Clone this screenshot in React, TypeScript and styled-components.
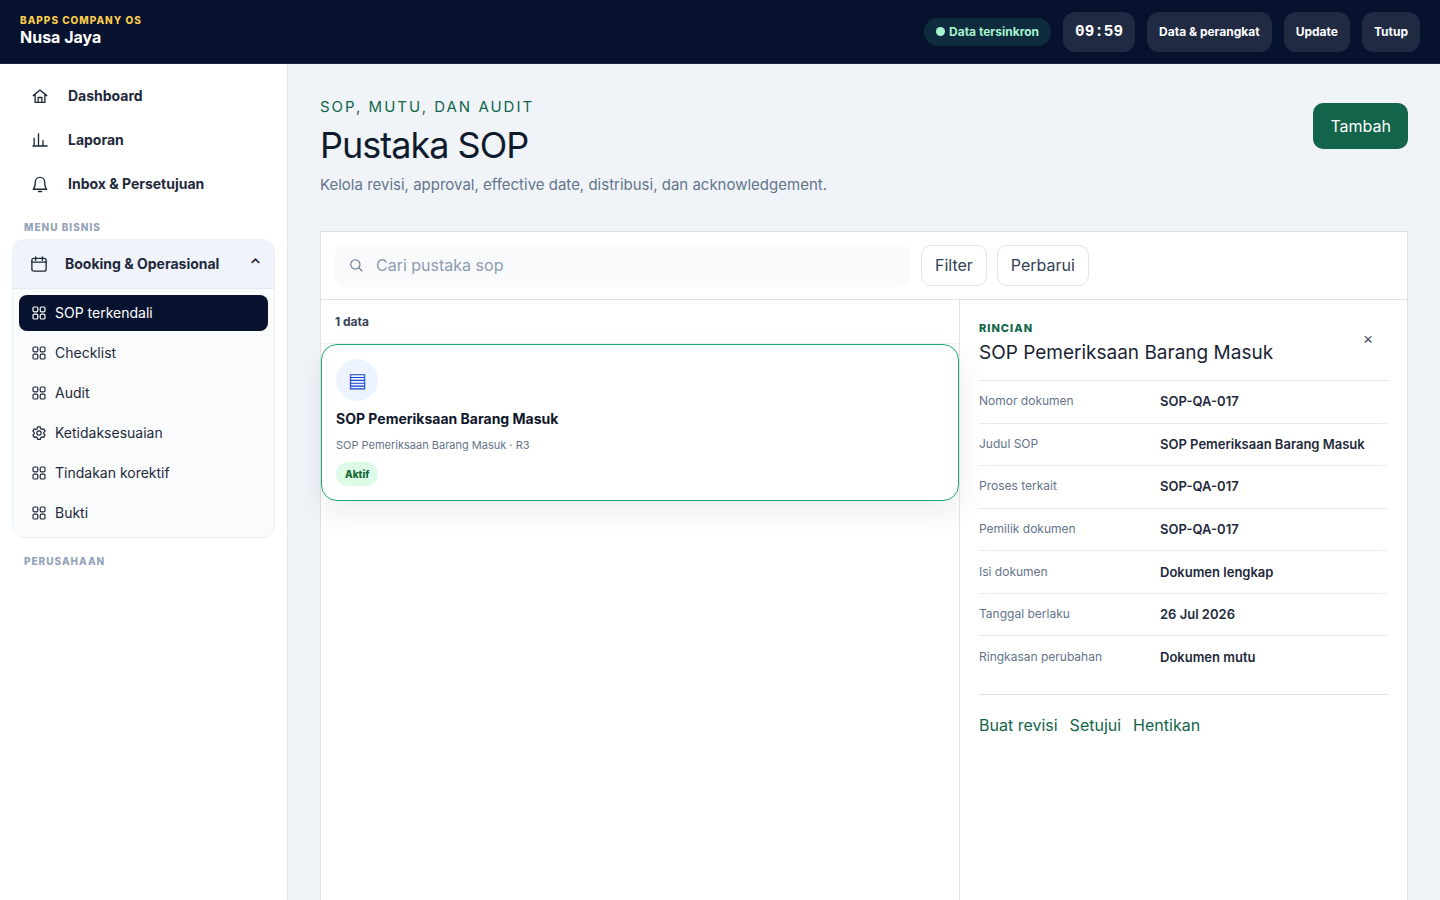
import React from "react";
import styled, { createGlobalStyle, css } from "styled-components";

const GlobalStyle = createGlobalStyle`
  *, *::before, *::after { box-sizing: border-box; }
  body {
    margin: 0;
    background: #f0f4f9;
    color: #1e293b;
    font-family: Inter, "Liberation Sans", sans-serif;
    font-size: 16px;
    line-height: 24px;
  }
  button, input { font: inherit; color: inherit; }
  button { cursor: pointer; }
  h1, h2, h3, p, dl, dd { margin: 0; }
`;

const Shell = styled.div`
  display: flex;
  flex-direction: column;
  min-height: 100vh;
`;

/* Top bar */
const TopBar = styled.header`
  display: flex;
  align-items: center;
  justify-content: space-between;
  height: 64px;
  padding: 0 20px;
  background: #07122e;
  border-bottom: 1px solid #1b2540;
  color: #fff;
`;
const Brand = styled.div`
  display: flex;
  flex-direction: column;
  padding-bottom: 4px;
`;
const BrandLabel = styled.span`
  color: #facc4b;
  font-size: 10px;
  font-weight: 800;
  letter-spacing: 1px;
  line-height: 14px;
`;
const BrandName = styled.strong`
  font-size: 16px;
  font-weight: 700;
  line-height: 20px;
`;
const TopActions = styled.div`
  display: flex;
  align-items: center;
  gap: 12px;
`;
const SyncPill = styled.span`
  display: flex;
  align-items: center;
  gap: 4px;
  height: 28px;
  padding: 0 12px;
  border-radius: 14px;
  background: #0e2c3d;
  color: #a7f3d0;
  font-size: 12px;
  font-weight: 700;
`;
const Dot = styled.i`
  width: 9px;
  height: 9px;
  border-radius: 50%;
  background: currentColor;
`;
const tile = css`
  display: flex;
  align-items: center;
  height: 40px;
  padding: 0 12px;
  border: 0;
  border-radius: 12px;
  background: #202a43;
  color: #fff;
  font-weight: 700;
`;
const Clock = styled.time`
  ${tile}
  font-family: "Liberation Mono", monospace;
  font-size: 16px;
`;
const TopButton = styled.button`
  ${tile}
  font-size: 12px;
`;

/* Sidebar */
const Body = styled.div`
  display: flex;
  flex: 1;
`;
const Sidebar = styled.nav`
  flex: 0 0 288px;
  padding: 10px 12px;
  background: #fff;
  border-right: 1px solid #e2e8f0;
`;
const NavLink = styled.a`
  display: flex;
  align-items: center;
  gap: 19px;
  height: 44px;
  padding: 0 19px;
  color: #1e293b;
  font-size: 14px;
  font-weight: 700;
  text-decoration: none;
`;
const NavCaption = styled.h2`
  padding: 13px 12px 4px;
  color: #94a3b8;
  font-size: 10px;
  font-weight: 800;
  letter-spacing: 1px;
  line-height: 16px;
`;
const Group = styled.section`
  overflow: hidden;
  margin-bottom: 2px;
  border: 1px solid #edf1f7;
  border-radius: 12px;
  background: #f9fbfd;
`;
const GroupToggle = styled.button`
  display: flex;
  align-items: center;
  gap: 17px;
  width: 100%;
  height: 49px;
  padding: 0 13px 0 17px;
  border: 0;
  border-bottom: 1px solid #e2e8f0;
  background: #f0f3f9;
  font-size: 14px;
  font-weight: 700;
  text-align: left;
`;
const GroupName = styled.span`
  flex: 1;
`;
const GroupList = styled.div`
  display: grid;
  gap: 4px;
  padding: 6px;
`;
const SubLink = styled.a<{ $active?: boolean }>`
  display: flex;
  align-items: center;
  gap: 8px;
  height: 36px;
  padding: 0 12px;
  border-radius: 8px;
  background: ${(p) => (p.$active ? "#07122e" : "transparent")};
  color: ${(p) => (p.$active ? "#fff" : "#1e293b")};
  font-size: 14px;
  text-decoration: none;
`;

/* Page */
const Main = styled.main`
  display: flex;
  flex: 1;
  flex-direction: column;
  min-width: 0;
  padding: 31px 32px 0;
`;
const PageHead = styled.div`
  display: flex;
  align-items: flex-start;
  justify-content: space-between;
  padding-bottom: 34px;
`;
const Eyebrow = styled.p`
  color: #12654a;
  font-size: 15px;
  letter-spacing: 2px;
`;
const Title = styled.h1`
  color: #0f1b2d;
  font-size: 36px;
  font-weight: 400;
  letter-spacing: -1px;
  line-height: 52px;
`;
const Lead = styled.p`
  padding-top: 2px;
  color: #64748b;
  font-size: 15px;
`;
const PrimaryButton = styled.button`
  height: 46px;
  margin-top: 8px;
  padding: 0 17px;
  border: 0;
  border-radius: 10px;
  background: #12654a;
  color: #fff;
`;
const Workspace = styled.section`
  display: flex;
  flex: 1;
  flex-direction: column;
  border: 1px solid #dde2e9;
  border-bottom: 0;
  background: #fff;
`;
const Toolbar = styled.div`
  display: flex;
  align-items: flex-start;
  gap: 10px;
  padding: 13px 14px 12px;
  border-bottom: 1px solid #dde2e9;
`;
const Search = styled.label`
  display: flex;
  flex: 1;
  align-items: center;
  gap: 12px;
  max-width: 576px;
  height: 42px;
  padding: 0 13px 2px;
  border-radius: 10px;
  background: #f8fafc;
  color: #64748b;
`;
const SearchInput = styled.input`
  flex: 1;
  min-width: 0;
  padding: 0;
  border: 0;
  outline: 0;
  background: transparent;
  color: #1e293b;
  &::placeholder { color: #8f9bb0; opacity: 1; }
`;
const ToolButton = styled.button`
  height: 41px;
  padding: 0 13px 2px;
  border: 1px solid #dfe4eb;
  border-radius: 10px;
  background: #fff;
  color: #334155;
`;
const Columns = styled.div`
  display: grid;
  flex: 1;
  grid-template-columns: minmax(0, 1fr) 448px;
`;
const ListPane = styled.div``;
const Count = styled.p`
  padding: 10px 14px 9px;
  border-bottom: 1px solid #edf0f4;
  color: #334155;
  font-size: 12px;
  font-weight: 700;
`;
const RecordCard = styled.article`
  display: flex;
  flex-direction: column;
  align-items: flex-start;
  gap: 8px;
  padding: 14px;
  border: 1px solid #20a878;
  border-radius: 16px;
  background: #fff;
  box-shadow: 0 12px 30px rgba(15, 23, 42, 0.08);
`;
const RecordIcon = styled.span`
  display: grid;
  place-items: center;
  width: 42px;
  height: 42px;
  border-radius: 50%;
  background: #eef4ff;
  color: #1d4ed8;
  font-size: 20px;
`;
const RecordTitle = styled.h3`
  color: #0f172a;
  font-size: 14px;
  font-weight: 700;
  line-height: 20px;
`;
const RecordMeta = styled.p`
  color: #64748b;
  font-size: 11px;
  line-height: 17px;
`;
const Badge = styled.span`
  padding: 0 9px;
  border-radius: 12px;
  background: #dcfce7;
  color: #166534;
  font-size: 10px;
  font-weight: 800;
`;

/* Detail pane */
const Detail = styled.aside`
  padding: 19px;
  border-left: 1px solid #dde2e9;
`;
const DetailHead = styled.div`
  display: flex;
  align-items: flex-start;
  justify-content: space-between;
  padding-bottom: 11px;
  border-bottom: 1px solid #e5e9ef;
`;
const DetailLabel = styled.p`
  color: #12654a;
  font-size: 11px;
  font-weight: 800;
  letter-spacing: 1px;
  line-height: 18px;
`;
const DetailTitle = styled.h2`
  color: #1a2434;
  font-size: 19px;
  font-weight: 400;
  line-height: 32px;
`;
const CloseButton = styled.button`
  width: 40px;
  height: 38px;
  padding: 0;
  border: 0;
  background: transparent;
  color: #475569;
  font-size: 16px;
`;
const Fields = styled.dl`
  display: grid;
  grid-auto-rows: 1fr;
  height: 298px;
`;
const Field = styled.div`
  display: grid;
  grid-template-columns: 181px 1fr;
  align-items: center;
  padding-bottom: 1px;
  border-bottom: 1px solid #e9edf2;
  &:last-child { border-bottom-color: transparent; }
`;
const FieldName = styled.dt`
  color: #64748b;
  font-size: 12px;
`;
const FieldValue = styled.dd`
  color: #1e293b;
  font-size: 13px;
  font-weight: 600;
`;
const DetailActions = styled.div`
  display: flex;
  gap: 12px;
  margin-top: 15px;
  padding-top: 18px;
  border-top: 1px solid #dde2e9;
`;
const TextButton = styled.button`
  padding: 0;
  border: 0;
  background: transparent;
  color: #12654a;
`;

/* Icons */
const icons = {
  home: <path d="M3 11.5 12 4l9 7.5M5.5 9.8V20.5h13V9.8M9.5 20.5V14h5v6.5" />,
  chart: <path d="M2.5 20h19M4.2 20V9.5M10 20V3.5M16 20v-7" />,
  bell: <path d="M3 19h18c-1.8-1.8-2.7-4-2.7-9.5a6.3 6.3 0 0 0-12.6 0C5.700 15 4.800 17.200 3 19ZM10 22h4" />,
  calendar: (
    <>
      <rect x="2.5" y="4.5" width="19" height="17" rx="2.5" />
      <path d="M2.5 9.5h19M7.5 2.5V7M16.5 2.5V7" />
    </>
  ),
  grid: (
    <>
      <rect x="3" y="3" width="7.2" height="7.2" rx="2" />
      <rect x="13.8" y="3" width="7.2" height="7.2" rx="2" />
      <rect x="3" y="13.8" width="7.2" height="7.2" rx="2" />
      <rect x="13.8" y="13.8" width="7.2" height="7.2" rx="2" />
    </>
  ),
  gear: (
    <>
      <circle cx="12" cy="12" r="3.2" />
      <path d="M10 2.8h4l.7 2.8 1.7 1 2.8-.8 2 3.4-2.1 2v1.900l2.100 2-2 3.400-2.800-.8-1.700 1-.7 2.800h-4l-.7-2.800-1.700-1-2.800.8-2-3.400 2.100-2v-1.900l-2.100-2 2-3.400 2.800.8 1.700-1Z" />
    </>
  ),
  search: (
    <>
      <circle cx="11" cy="11" r="7" />
      <path d="m16 16 5 5" />
    </>
  ),
};
type IconName = keyof typeof icons;

function Icon({ name, size = 18, weight = 1.8 }: { name: IconName; size?: number; weight?: number }) {
  return (
    <svg
      width={size}
      height={size}
      viewBox="0 0 24 24"
      fill="none"
      stroke="currentColor"
      strokeWidth={weight}
      strokeLinecap="round"
      strokeLinejoin="round"
      aria-hidden="true"
    >
      {icons[name]}
    </svg>
  );
}

const mainLinks: { label: string; icon: IconName }[] = [
  { label: "Dashboard", icon: "home" },
  { label: "Laporan", icon: "chart" },
  { label: "Inbox & Persetujuan", icon: "bell" },
];
const subLinks: { label: string; icon: IconName }[] = [
  { label: "SOP terkendali", icon: "grid" },
  { label: "Checklist", icon: "grid" },
  { label: "Audit", icon: "grid" },
  { label: "Ketidaksesuaian", icon: "gear" },
  { label: "Tindakan korektif", icon: "grid" },
  { label: "Bukti", icon: "grid" },
];
const fields = [
  ["Nomor dokumen", "SOP-QA-017"],
  ["Judul SOP", "SOP Pemeriksaan Barang Masuk"],
  ["Proses terkait", "SOP-QA-017"],
  ["Pemilik dokumen", "SOP-QA-017"],
  ["Isi dokumen", "Dokumen lengkap"],
  ["Tanggal berlaku", "26 Jul 2026"],
  ["Ringkasan perubahan", "Dokumen mutu"],
];

export default function App() {
  return (
    <Shell>
      <GlobalStyle />
      <TopBar>
        <Brand>
          <BrandLabel>BAPPS COMPANY OS</BrandLabel>
          <BrandName>Nusa Jaya</BrandName>
        </Brand>
        <TopActions>
          <SyncPill><Dot />Data tersinkron</SyncPill>
          <Clock>09:59</Clock>
          <TopButton type="button">Data &amp; perangkat</TopButton>
          <TopButton type="button">Update</TopButton>
          <TopButton type="button">Tutup</TopButton>
        </TopActions>
      </TopBar>
      <Body>
        <Sidebar>
          {mainLinks.map((l) => (
            <NavLink href="#" key={l.label}>
              <Icon name={l.icon} />
              {l.label}
            </NavLink>
          ))}
          <NavCaption>MENU BISNIS</NavCaption>
          <Group>
            <GroupToggle type="button" aria-expanded="true">
              <Icon name="calendar" />
              <GroupName>Booking &amp; Operasional</GroupName>
              <span>⌃</span>
            </GroupToggle>
            <GroupList>
              {subLinks.map((l, i) => (
                <SubLink href="#" key={l.label} $active={i === 0}>
                  <Icon name={l.icon} size={16} />
                  {l.label}
                </SubLink>
              ))}
            </GroupList>
          </Group>
          <NavCaption>PERUSAHAAN</NavCaption>
        </Sidebar>
        <Main>
          <PageHead>
            <div>
              <Eyebrow>SOP, MUTU, DAN AUDIT</Eyebrow>
              <Title>Pustaka SOP</Title>
              <Lead>Kelola revisi, approval, effective date, distribusi, dan acknowledgement.</Lead>
            </div>
            <PrimaryButton type="button">Tambah</PrimaryButton>
          </PageHead>
          <Workspace>
            <Toolbar>
              <Search>
                <Icon name="search" size={16} weight={1.6} />
                <SearchInput type="search" placeholder="Cari pustaka sop" aria-label="Cari pustaka sop" />
              </Search>
              <ToolButton type="button">Filter</ToolButton>
              <ToolButton type="button">Perbarui</ToolButton>
            </Toolbar>
            <Columns>
              <ListPane>
                <Count>1 data</Count>
                <RecordCard>
                  <RecordIcon>▤</RecordIcon>
                  <RecordTitle>SOP Pemeriksaan Barang Masuk</RecordTitle>
                  <RecordMeta>SOP Pemeriksaan Barang Masuk · R3</RecordMeta>
                  <Badge>Aktif</Badge>
                </RecordCard>
              </ListPane>
              <Detail>
                <DetailHead>
                  <div>
                    <DetailLabel>RINCIAN</DetailLabel>
                    <DetailTitle>SOP Pemeriksaan Barang Masuk</DetailTitle>
                  </div>
                  <CloseButton type="button" aria-label="Tutup rincian">×</CloseButton>
                </DetailHead>
                <Fields>
                  {fields.map(([name, value]) => (
                    <Field key={name}>
                      <FieldName>{name}</FieldName>
                      <FieldValue>{value}</FieldValue>
                    </Field>
                  ))}
                </Fields>
                <DetailActions>
                  <TextButton type="button">Buat revisi</TextButton>
                  <TextButton type="button">Setujui</TextButton>
                  <TextButton type="button">Hentikan</TextButton>
                </DetailActions>
              </Detail>
            </Columns>
          </Workspace>
        </Main>
      </Body>
    </Shell>
  );
}
